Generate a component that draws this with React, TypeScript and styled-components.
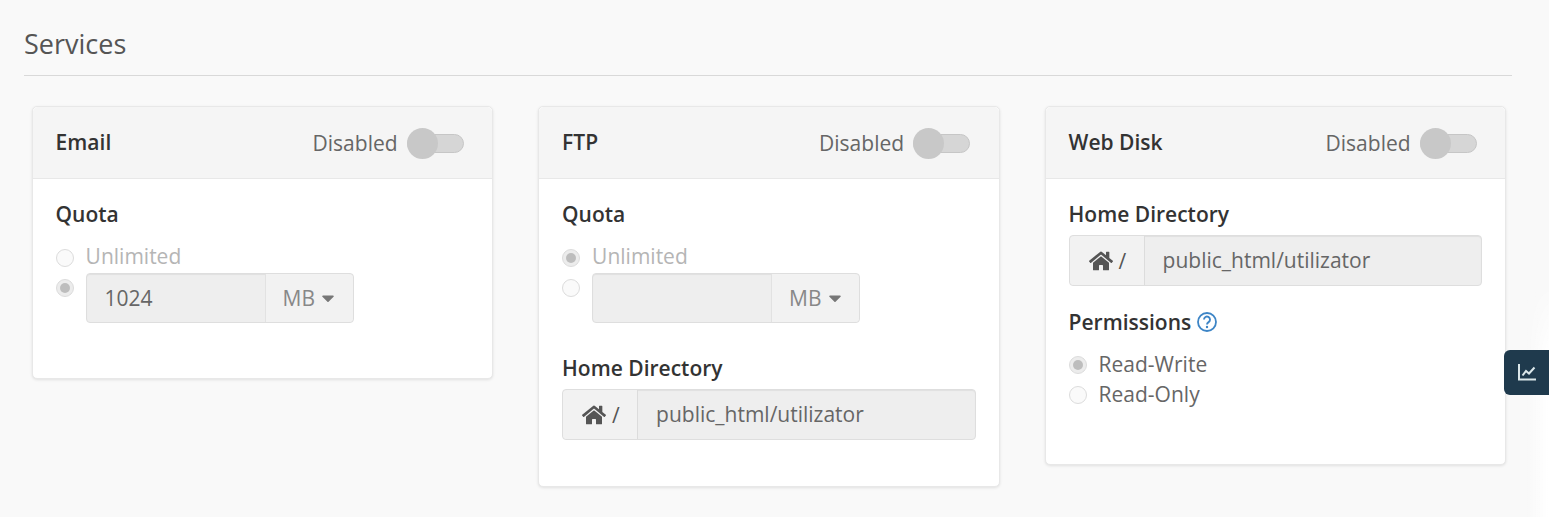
import styled, { createGlobalStyle } from "styled-components";
import { FaHome, FaCaretDown } from "react-icons/fa";

const GlobalStyle = createGlobalStyle`
  html, body {
    margin: 0;
    padding: 0;
    background: #f9f9f9;
  }
  body {
    font-family: "Open Sans", "Liberation Sans", sans-serif;
    font-size: 21px;
    color: #333;
    overflow: hidden;
  }
`;

const Page = styled.div`
  position: relative;
  height: 517px;
  padding: 23px 37px 0 24px;
  box-sizing: border-box;
  overflow: hidden;
`;

const Title = styled.h2`
  margin: 0;
  padding-bottom: 11px;
  font-size: 27px;
  line-height: 41px;
  font-weight: 400;
  color: #555;
  border-bottom: 1px solid #d9d9d9;
`;

const Cards = styled.div`
  display: grid;
  grid-template-columns: 461.5px 461.5px 461.5px;
  column-gap: 45px;
  align-items: start;
  padding: 30px 0 0 7.6px;
`;

const Card = styled.section`
  background: #fff;
  border: 1px solid #e8e8e8;
  border-radius: 5px;
  box-shadow: 0 1px 3px rgba(0, 0, 0, 0.1);
  box-sizing: border-box;
`;

const CardHeader = styled.header`
  display: flex;
  align-items: center;
  justify-content: space-between;
  height: 72px;
  padding: 0 28.5px 0 23px;
  box-sizing: border-box;
  background: #f5f5f5;
  border-bottom: 1px solid #e8e8e8;
  border-radius: 5px 5px 0 0;
`;

const CardTitle = styled.h3`
  margin: 0 0 2px;
  font-size: 21px;
  font-weight: 600;
  color: #333;
`;

const Status = styled.div`
  display: flex;
  align-items: center;
  gap: 9px;
  margin-top: 1px;
  color: #666;
`;

const Toggle = styled.span`
  position: relative;
  display: block;
  width: 57px;
  height: 19px;
  box-sizing: border-box;
  background: #d6d6d6;
  border: 1px solid #c6c6c6;
  border-radius: 10px;

  &::before {
    content: "";
    position: absolute;
    left: -1px;
    top: -7px;
    width: 31px;
    height: 31px;
    border-radius: 50%;
    background: #c8c8c8;
  }
`;

const CardBody = styled.div`
  padding: 21px 23px 24px;
`;

const Field = styled.div<{ $loose?: boolean }>`
  margin-bottom: ${(p) => (p.$loose ? "31px" : "22px")};
`;

const Label = styled.div`
  margin-bottom: 7px;
  font-size: 21px;
  line-height: 28px;
  font-weight: 600;
  color: #333;
  display: flex;
  align-items: center;
  gap: 5px;
`;

const RadioList = styled.div`
  padding-top: 6px;
`;

const RadioRow = styled.div<{ $muted?: boolean }>`
  display: flex;
  align-items: flex-start;
  gap: 12px;
  min-height: 30px;
  line-height: 30px;
  color: ${(p) => (p.$muted ? "#b5b5b5" : "#666")};
`;

const InputRow = styled(RadioRow)`
  margin-top: 2px;
`;

const Radio = styled.span<{ $checked?: boolean; $top?: number }>`
  position: relative;
  flex: none;
  width: 18px;
  height: 18px;
  margin-top: ${(p) => p.$top ?? 7}px;
  box-sizing: border-box;
  border-radius: 50%;
  border: 1px solid #dcdcdc;
  background: ${(p) => (p.$checked ? "#ececec" : "#fafafa")};

  &::after {
    content: "";
    display: ${(p) => (p.$checked ? "block" : "none")};
    position: absolute;
    left: 3px;
    top: 3px;
    width: 10px;
    height: 10px;
    border-radius: 50%;
    background: #bdbdbd;
  }
`;

const Group = styled.div<{ $width?: string; $height?: string }>`
  display: flex;
  width: ${(p) => p.$width || "100%"};
  height: ${(p) => p.$height || "51px"};
  box-sizing: border-box;
  border: 1px solid #dedede;
  border-radius: 4px;
  background: #eee;
  box-shadow: inset 0 1px 1px rgba(0, 0, 0, 0.06);
  color: #666;
  line-height: 48px;
`;

const Value = styled.div`
  flex: 1;
  padding-left: 18px;
`;

const UnitAddon = styled.div`
  display: flex;
  align-items: center;
  gap: 3px;
  width: 88px;
  padding-left: 17px;
  box-sizing: border-box;
  background: #f2f2f2;
  border-left: 1px solid #e2e2e2;
  border-radius: 0 4px 4px 0;
  color: #888;
`;

const HomeAddon = styled.div`
  display: flex;
  align-items: center;
  gap: 6px;
  width: 75px;
  padding-left: 19px;
  box-sizing: border-box;
  background: #f2f2f2;
  border-right: 1px solid #dcdcdc;
  border-radius: 4px 0 0 4px;
  color: #555;
`;

const Help = styled.svg`
  width: 22px;
  height: 22px;
`;

const SideTab = styled.div`
  position: absolute;
  right: 0;
  top: 350px;
  width: 45px;
  height: 45px;
  display: flex;
  align-items: center;
  padding-left: 14px;
  box-sizing: border-box;
  background: #1f3a4d;
  border-radius: 6px 0 0 6px;
`;

const EdgeFade = styled.div`
  position: absolute;
  right: 0;
  top: 280px;
  bottom: 0;
  width: 22px;
  background: linear-gradient(to right, rgba(255, 255, 255, 0), #fff);
  mask-image: linear-gradient(to bottom, transparent, #000 80px);
`;

const QuotaField = ({ unlimited, value }: { unlimited?: boolean; value?: string }) => (
  <Field $loose>
    <Label>Quota</Label>
    <RadioList>
      <RadioRow $muted>
        <Radio $checked={unlimited} $top={8} />
        Unlimited
      </RadioRow>
      <InputRow>
        <Radio $checked={!unlimited} $top={6} />
        <Group $width="268px" $height="50px">
          <Value>{value}</Value>
          <UnitAddon>
            MB <FaCaretDown size={20} color="#777" />
          </UnitAddon>
        </Group>
      </InputRow>
    </RadioList>
  </Field>
);

const HomeField = () => (
  <Field>
    <Label>Home Directory</Label>
    <Group>
      <HomeAddon>
        <FaHome size={24} color="#555" /> /
      </HomeAddon>
      <Value>public_html/utilizator</Value>
    </Group>
  </Field>
);

const Header = ({ title }: { title: string }) => (
  <CardHeader>
    <CardTitle>{title}</CardTitle>
    <Status>
      Disabled
      <Toggle />
    </Status>
  </CardHeader>
);

export default function App() {
  return (
    <Page>
      <GlobalStyle />
      <Title>Services</Title>
      <Cards>
        <Card>
          <Header title="Email" />
          <CardBody>
            <QuotaField value="1024" />
          </CardBody>
        </Card>
        <Card>
          <Header title="FTP" />
          <CardBody>
            <QuotaField unlimited />
            <HomeField />
          </CardBody>
        </Card>
        <Card>
          <Header title="Web Disk" />
          <CardBody>
            <HomeField />
            <Field $loose>
              <Label>
                Permissions
                <Help viewBox="0 0 22 22" fill="none">
                  <circle cx="11" cy="11" r="9" stroke="#3d85c6" strokeWidth="1.8" />
                  <path d="M8 8.6a3 3 0 1 1 4.6 2.5c-1 .7-1.6 1.2-1.6 2.4" stroke="#3d85c6" strokeWidth="1.9" />
                  <circle cx="11" cy="16" r="1.2" fill="#3d85c6" />
                </Help>
              </Label>
              <RadioList>
                <RadioRow>
                  <Radio $checked />
                  Read-Write
                </RadioRow>
                <RadioRow>
                  <Radio />
                  Read-Only
                </RadioRow>
              </RadioList>
            </Field>
          </CardBody>
        </Card>
      </Cards>
      <EdgeFade />
      <SideTab>
        <svg width="18" height="17" viewBox="0 0 18 17" fill="none" stroke="#dbe7ea" strokeWidth="2">
          <path d="M1 0v15.5h17" />
          <path d="M4.5 11.5l3.5-4.5 3 2.5 5.5-6" />
        </svg>
      </SideTab>
    </Page>
  );
}
